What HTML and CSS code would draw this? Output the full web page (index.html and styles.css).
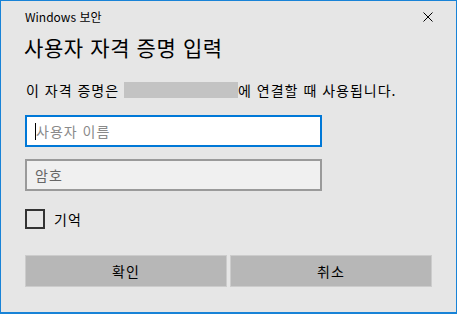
FILE: index.html
```html
<!DOCTYPE html>
<html lang="ko">
  <head>
    <meta charset="UTF-8" />
    <title>Windows 보안</title>
    <link rel="stylesheet" href="styles.css">
  </head>
  <body>
    <div class="dialog">
      <div class="titlebar">
        <span class="app-name">Windows 보안</span>
        <span class="close">
          <svg width="10" height="10" viewBox="0 0 10 10">
            <path d="M0.5 0.5 L9.5 9.5 M9.5 0.5 L0.5 9.5" stroke="#000" stroke-width="1" fill="none" />
          </svg>
        </span>
      </div>

      <div class="heading">사용자 자격 증명 입력</div>

      <div class="message">이 자격 증명은 <span class="redacted"></span>에 연결할 때 사용됩니다.</div>

      <div class="field focused">
        <span class="caret"></span><span class="placeholder">사용자 이름</span>
      </div>
      <div class="field">
        <span class="placeholder">암호</span>
      </div>

      <label class="remember">
        <span class="checkbox"></span>
        <span>기억</span>
      </label>

      <div class="buttons">
        <div class="button">확인</div>
        <div class="button">취소</div>
      </div>
    </div>
  </body>
</html>
```

FILE: styles.css
```css
body {
  margin: 0;
  padding: 0;
  font-family: "Noto Sans CJK KR", "Noto Sans", sans-serif;
  color: #000;
}
.dialog {
  box-sizing: border-box;
  width: 457px;
  height: 314px;
  background-color: #e6e6e6;
  border: 1px solid #1883d7;
  border-bottom-width: 2px;
  padding: 0 24px 0 24px;
}
.titlebar {
  display: flex;
  justify-content: space-between;
  align-items: center;
  height: 32px;
}
.app-name {
  font-size: 12px;
  line-height: 1;
}
.close {
  display: flex;
  margin-right: -1px;
}
.heading {
  font-size: 21px;
  line-height: 28px;
  letter-spacing: 0.6px;
  margin-left: -1px;
}
.message {
  margin-top: 21px;
  margin-left: 1px;
  font-size: 14px;
  line-height: 17px;
  letter-spacing: 1px;
}
.redacted {
  display: inline-block;
  vertical-align: top;
  width: 114px;
  height: 16px;
  background-color: #c3c3c3;
}
.field {
  box-sizing: border-box;
  width: 297px;
  height: 32px;
  margin-top: 12px;
  border: 2px solid #9a9a9a;
  background-color: #f0f0f0;
  display: flex;
  align-items: center;
  padding-left: 8px;
  font-size: 14px;
  letter-spacing: 1px;
}
.field.focused {
  margin-top: 16px;
  border-color: #0078d7;
  background-color: #fff;
}
.placeholder {
  color: #666;
}
.focused .placeholder {
  color: #8a8a8a;
}
.caret {
  width: 1px;
  height: 17px;
  background-color: #000;
}
.remember {
  display: flex;
  align-items: center;
  margin-top: 18px;
  font-size: 14px;
  line-height: 20px;
  letter-spacing: 1px;
}
.checkbox {
  box-sizing: border-box;
  width: 20px;
  height: 20px;
  border: 2px solid #333;
  margin-right: 9px;
}
.buttons {
  display: flex;
  gap: 3px;
  margin-top: 26px;
}
.button {
  box-sizing: border-box;
  width: 202px;
  height: 32px;
  background-color: #b7b7b7;
  border: 1px solid #cccccc;
  display: flex;
  align-items: center;
  justify-content: center;
  font-size: 14px;
  letter-spacing: 1px;
}
```
